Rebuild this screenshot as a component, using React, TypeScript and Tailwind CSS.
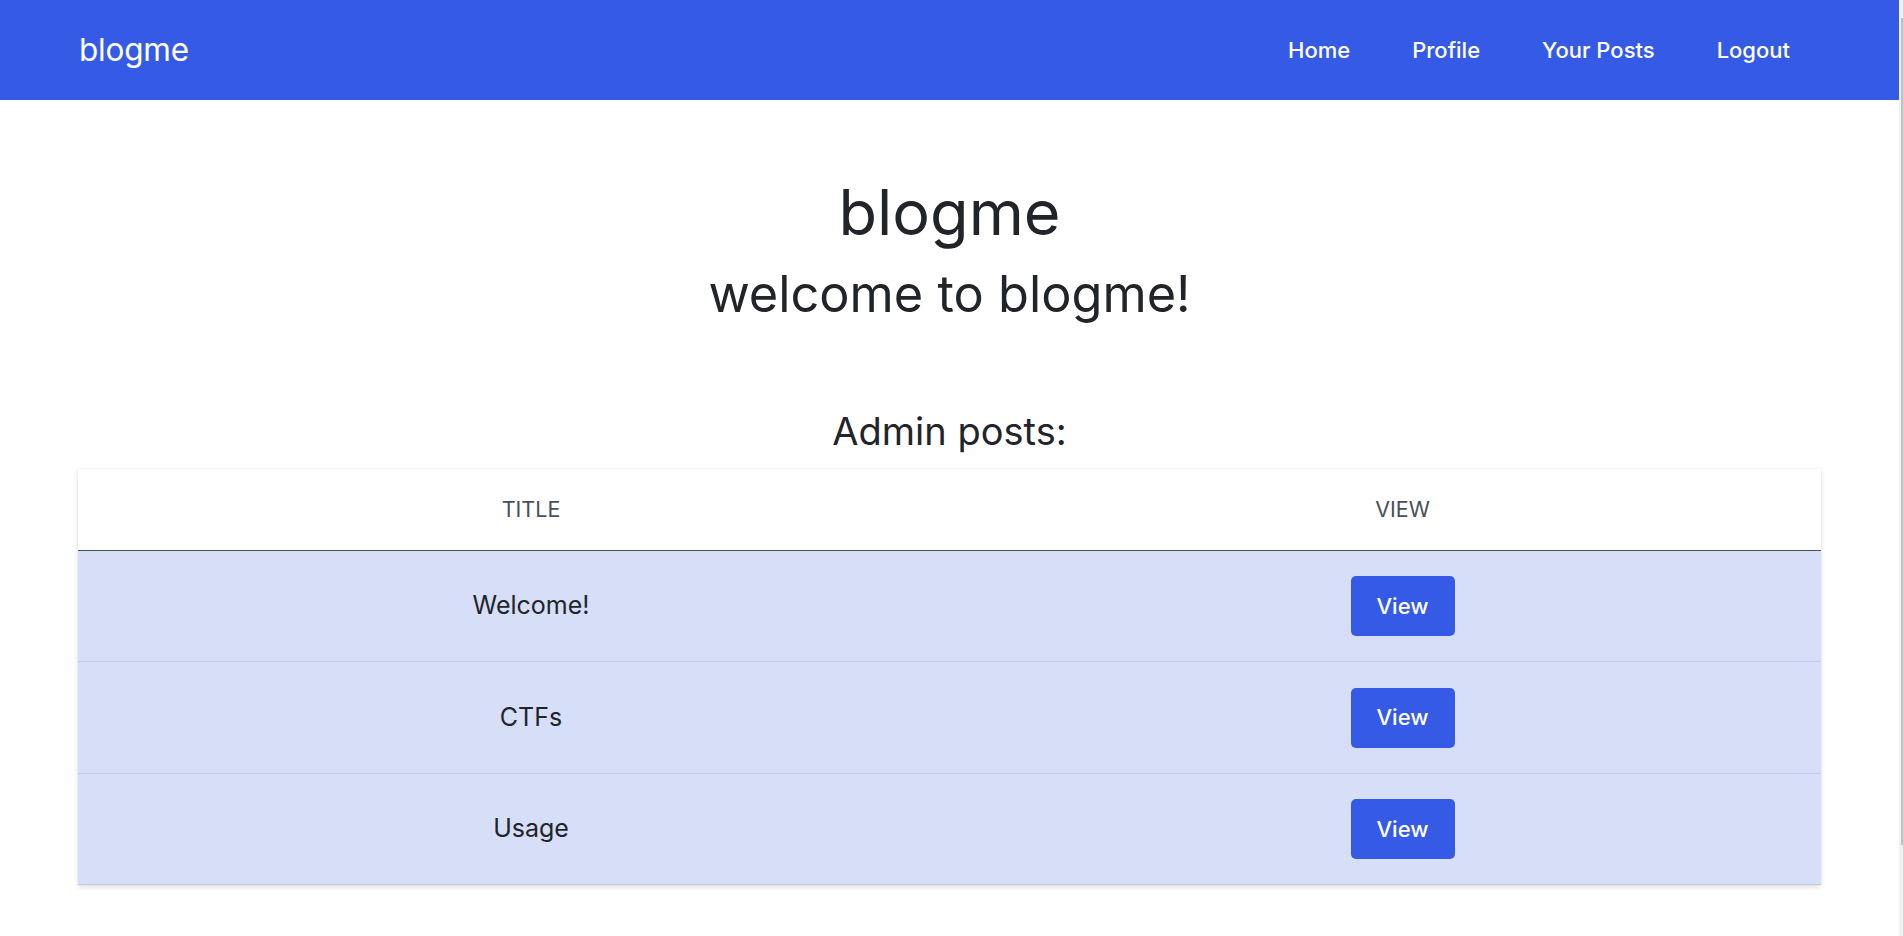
import React from "react";

const posts = ["Welcome!", "CTFs", "Usage"];

export default function App() {
  return (
    <div className="flex h-[936px] w-full overflow-hidden bg-white font-['Inter','Roboto',sans-serif] text-[#212529]">
      <div className="min-w-0 flex-1">
        <nav className="flex h-[100px] items-center justify-between bg-[#355be6] px-[78px] text-white">
          <a className="ml-[1px] text-[31.5px] font-normal tracking-[-0.2px]">blogme</a>
          <ul className="flex items-center">
            {["Home", "Profile", "Your Posts", "Logout"].map((l) => (
              <li key={l} className="px-[31px] text-[22px] font-medium">
                {l}
              </li>
            ))}
          </ul>
        </nav>

        <main className="px-[78px]">
          <div className="flex flex-col items-center">
            <h1 className="mt-[75px] text-[63px] font-normal leading-[1.2]">blogme</h1>
            <h2 className="mt-[13px] text-[50.5px] font-normal leading-[1.2]">welcome to blogme!</h2>
            <h3 className="mt-[85px] text-[38px] font-normal leading-[1.2]">Admin posts:</h3>
          </div>

          <div className="mt-[14px] bg-white shadow-[0_2px_5px_rgba(0,0,0,0.12),0_0_2px_rgba(0,0,0,0.06)]">
            <div className="grid h-[82px] grid-cols-[906fr_837fr] items-center border-b border-[#4a4f5c] text-[21.5px] uppercase text-[#4a4f5c]">
              <div className="text-center">Title</div>
              <div className="text-center">View</div>
            </div>
            {posts.map((p) => (
              <div
                key={p}
                className="grid h-[111.5px] grid-cols-[906fr_837fr] items-center border-b border-[#c3cbea] bg-[#d7def8] text-[25px]"
              >
                <div className="text-center">{p}</div>
                <div className="flex justify-center">
                  <button className="h-[60px] w-[104px] rounded-[5px] bg-[#355be6] text-[22px] font-medium text-white">
                    View
                  </button>
                </div>
              </div>
            ))}
          </div>
        </main>
      </div>
      <div className="flex w-[4px] flex-col bg-[#f1f1f1] pt-[18px]">
        <div className="ml-auto h-[827px] w-[2px] bg-[#c1c1c1]" />
      </div>
    </div>
  );
}
